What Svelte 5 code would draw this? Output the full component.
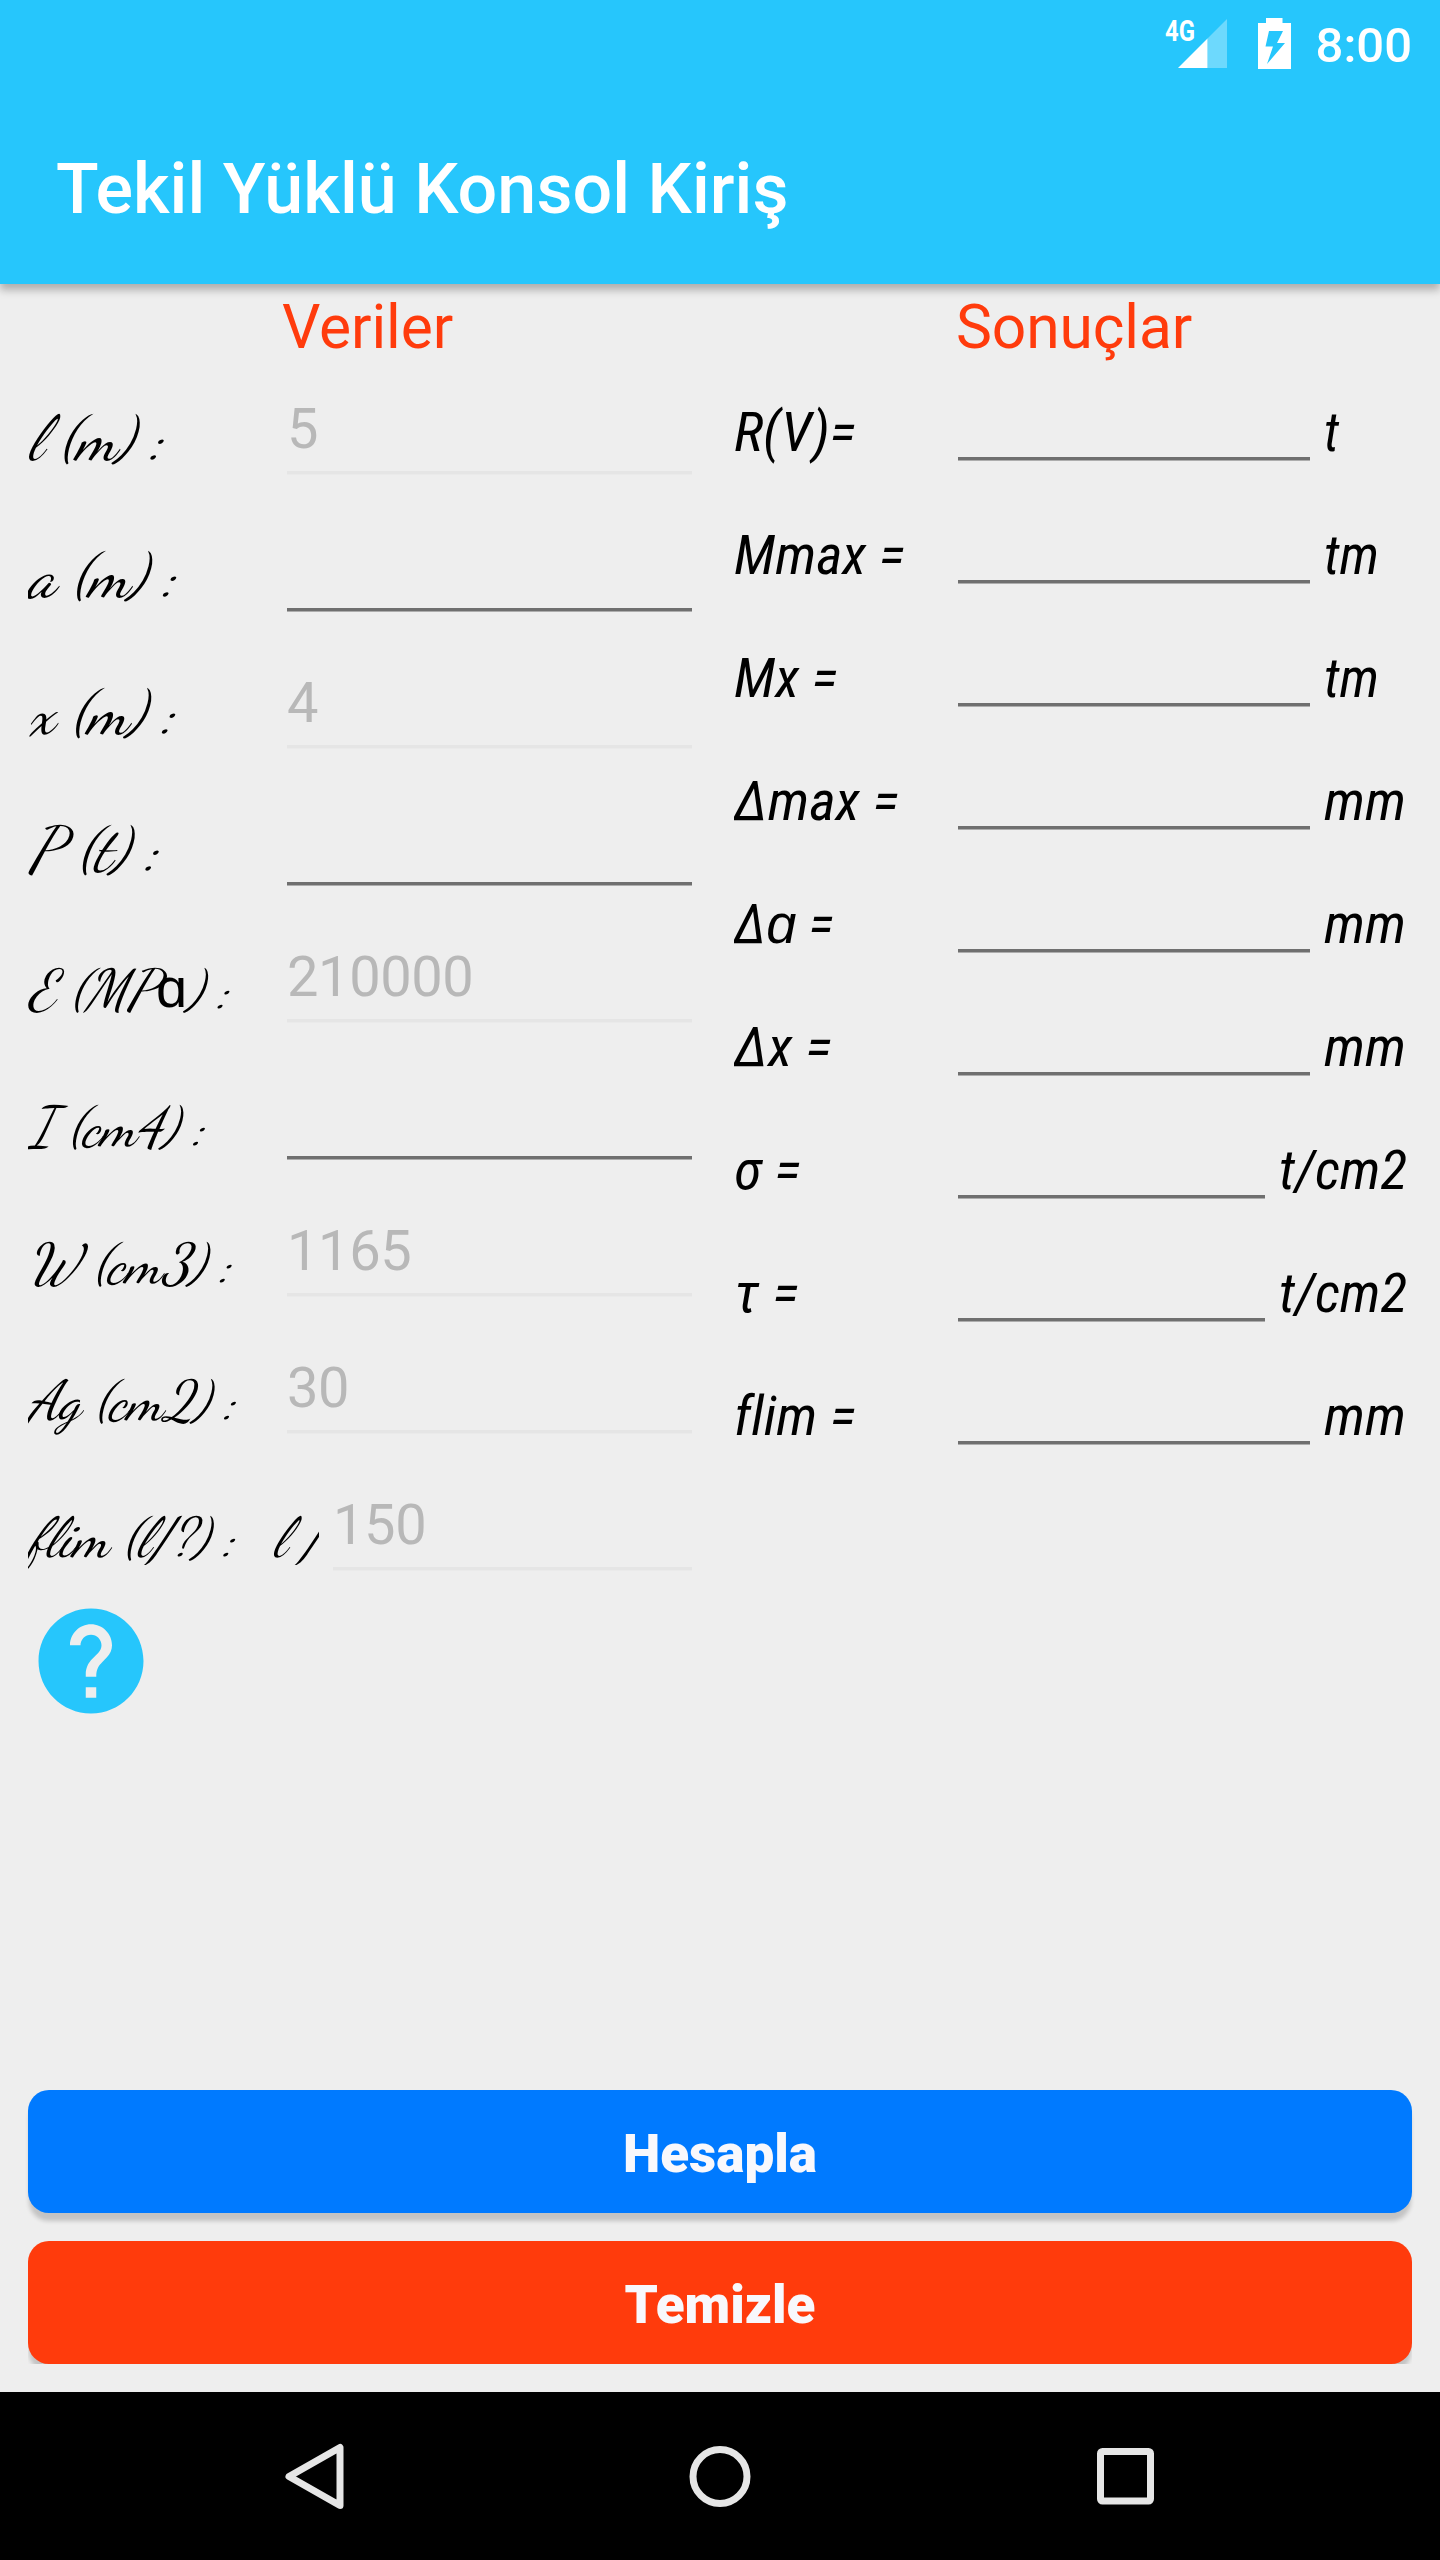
<script>
  const inputs = [
    { label: ["l (m) :"], large: true, hint: "5" },
    { label: ["a (m) :"], large: true },
    { label: ["x (m) :"], large: true, hint: "4" },
    { label: ["P (t) :"], large: true },
    { label: ["E (MP", "ɑ", ") :"], hint: "210000" },
    { label: ["I (cm4) :"] },
    { label: ["W (cm3) :"], hint: "1165" },
    { label: ["Ag (cm2) :"], hint: "30" },
    { label: ["flim (l/?) :"], hint: "150", prefix: "l /" },
  ];

  const results = [
    { label: "R(V)=", width: 122, unit: "t", unitWidth: 15 },
    { label: "Mmax =", width: 171, unit: "tm", unitWidth: 55 },
    { label: "Mx =", width: 104, unit: "tm", unitWidth: 55 },
    { label: "Δmax =", width: 165, unit: "mm", unitWidth: 82 },
    { label: "Δɑ =", width: 100, unit: "mm", unitWidth: 82 },
    { label: "Δx =", width: 98, unit: "mm", unitWidth: 82 },
    { label: "σ =", width: 67, unit: "t/cm2", unitWidth: 128 },
    { label: "τ =", width: 65, unit: "t/cm2", unitWidth: 128 },
    { label: "flim =", width: 122, unit: "mm", unitWidth: 82 },
  ];
</script>

<div class="screen">
  <header>
    <div class="status">
      <svg class="signal" width="66" height="60" viewBox="0 0 66 60">
        <text x="0" y="30" textLength="30" lengthAdjust="spacingAndGlyphs">4G</text>
        <path d="M42.5 27.5 62 8v49H42.5z" fill="#fff" fill-opacity=".33" />
        <path d="M13 57 42.5 27.5V57z" fill="#fff" />
      </svg>
      <svg class="battery" width="33" height="51" viewBox="0 0 33 51">
        <path
          fill="#fff"
          fill-rule="evenodd"
          d="M8 0h16.500v5H33v46H0V5h8zM11 13 7.500 28.500h7.500L9 46 27 25H19l6-12z"
        />
      </svg>
      <span class="clock">8:00</span>
    </div>
    <h1>Tekil Yüklü Konsol Kiriş</h1>
  </header>

  <main>
    <section class="data">
      <h2>Veriler</h2>
      {#each inputs as row}
        <div class="row">
          <svg class="label" class:large={row.large} width="240" height="80">
            <text x="0" y={row.large ? 57.5 : 58.5}>{row.label[0]}{#if row.label[1]}<tspan class="alpha" dy="-1">{row.label[1]}</tspan><tspan dy="1">{row.label[2]}</tspan>{/if}</text>
          </svg>
          {#if row.prefix}
            <svg class="label prefix" width="46" height="80">
              <text x="0" y="58.5">{row.prefix}</text>
            </svg>
          {/if}
          <input class:hinted={row.hint} placeholder={row.hint} />
        </div>
      {/each}
      <svg class="help" width="126" height="126" viewBox="0 0 24 24">
        <path
          fill="#26c6fc"
          d="M12 2C6.480 2 2 6.480 2 12s4.480 10 10 10 10-4.480 10-10S17.520 2 12 2zm1 17h-2v-2h2v2zm2.070-7.750l-.9.92C13.450 12.900 13 13.500 13 15h-2v-.5c0-1.100.45-2.100 1.170-2.830l1.240-1.260c.37-.36.59-.86.59-1.410 0-1.100-.9-2-2-2s-2 .9-2 2H8c0-2.210 1.790-4 4-4s4 1.790 4 4c0 .88-.36 1.680-.93 2.250z"
        />
      </svg>
    </section>

    <section class="results">
      <h2>Sonuçlar</h2>
      {#each results as row}
        <div class="row">
          <svg class="name" width="224" height="80">
            <text x="0" y="59" textLength={row.width} lengthAdjust="spacingAndGlyphs">{row.label}</text>
          </svg>
          <input />
          <svg class="unit" class:wide={row.unit === "t/cm2"} height="80">
            <text x="0" y="59" textLength={row.unitWidth} lengthAdjust="spacingAndGlyphs">{row.unit}</text>
          </svg>
        </div>
      {/each}
    </section>
  </main>

  <div class="actions">
    <button class="calculate">Hesapla</button>
    <div class="clip"><button class="clear">Temizle</button></div>
  </div>

  <nav>
    <svg width="66" height="72" viewBox="0 0 66 72">
      <path d="M58 7.500v58L7 36.500z" />
    </svg>
    <svg width="66" height="72" viewBox="0 0 66 72">
      <circle cx="33" cy="36.500" r="27" />
    </svg>
    <svg width="66" height="72" viewBox="0 0 66 72">
      <rect x="8.500" y="11.500" width="50" height="49.500" rx="2" />
    </svg>
  </nav>
</div>

<style>
  :global(body) {
    background: #eee;
  }

  .screen {
    display: flex;
    flex-direction: column;
    width: 1440px;
    height: 2560px;
    overflow: hidden;
    background: #eee;
    font-family: Roboto, "Liberation Sans", sans-serif;
  }

  header {
    height: 284px;
    background: #26c6fc;
    box-shadow: 0 6px 8px rgba(0, 0, 0, 0.27);
    color: #fff;
  }

  .status {
    display: flex;
    align-items: flex-start;
    justify-content: flex-end;
    height: 84px;
    padding: 0 28px 0 0;
    box-sizing: border-box;
  }

  .signal {
    margin: 11px 27px 0 0;
  }

  .signal text {
    fill: #fff;
    font-size: 29px;
    font-weight: 700;
  }

  .battery {
    margin: 18px 25px 0 0;
  }

  .clock {
    margin-top: 16px;
    font-size: 49px;
    font-weight: 500;
    line-height: 60px;
  }

  h1 {
    margin: 65px 0 0 56px;
    font-size: 70px;
    font-weight: 500;
    line-height: 80px;
    letter-spacing: 0.06px;
  }

  main {
    display: flex;
    flex: 1;
  }

  h2 {
    height: 85px;
    margin: 0;
    color: #ff3b0c;
    font-size: 60.500px;
    font-weight: 400;
    line-height: 87px;
    letter-spacing: -0.1px;
  }

  .data {
    width: 692px;
    padding-left: 28px;
    box-sizing: border-box;
  }

  .data h2 {
    padding-left: 254px;
  }

  .results {
    width: 748px;
    padding-left: 42px;
    box-sizing: border-box;
  }

  .results h2 {
    padding-left: 222px;
  }

  .row {
    display: flex;
    align-items: flex-start;
  }

  .data .row {
    height: 137px;
  }

  .results .row {
    height: 123px;
  }

  svg {
    display: block;
    flex: none;
  }

  .label {
    margin: 32px 19px 0 0;
    overflow: hidden;
    font-family: "Dancing Script", "Liberation Serif", serif;
    font-size: 56px;
    font-style: italic;
    font-weight: 450;
  }

  .label.large {
    font-size: 63px;
  }

  .prefix {
    margin-left: -14px;
    margin-right: 14px;
  }

  .alpha {
    font-family: Roboto, sans-serif;
    font-style: normal;
    font-weight: 500;
  }

  input {
    flex: 1;
    min-width: 0;
    height: 75px;
    margin: 30px 0 0;
    padding: 0 0 12px;
    box-sizing: border-box;
    border: 0;
    border-bottom: 3px solid #6f6f6f;
    border-radius: 0;
    box-shadow: 0 1px 0 #adadad;
    outline: 0;
    background: none;
    font-family: inherit;
    font-size: 56px;
    letter-spacing: -0.4px;
  }

  input.hinted {
    border-color: #e5e5e5;
    box-shadow: 0 1px 0 #eaeaea;
  }

  input::placeholder {
    color: #b8b8b8;
    opacity: 1;
  }

  .results input {
    margin-top: 16px;
  }

  .name,
  .unit {
    margin-top: 23px;
    font-size: 56px;
    font-style: italic;
    font-stretch: condensed;
    font-variant-ligatures: none;
  }

  .unit {
    width: 116px;
    margin-left: 14px;
  }

  .unit.wide {
    width: 161px;
  }

  .help {
    margin-top: -4px;
  }

  .actions {
    display: flex;
    flex-direction: column;
    gap: 28px;
    padding: 0 28px 28px;
  }

  .clip {
    overflow: hidden;
  }

  button {
    display: block;
    width: 100%;
    height: 123px;
    padding: 4px 0 0;
    border: 0;
    border-radius: 21px;
    box-shadow: 0 9px 4px -1px rgba(0, 0, 0, 0.18);
    color: #f8f8fc;
    font-family: inherit;
    font-size: 53px;
    font-weight: 900;
  }

  .calculate {
    background: #007aff;
  }

  .clear {
    background: #ff3b0c;
  }

  nav {
    display: flex;
    justify-content: center;
    gap: 339px;
    height: 168px;
    padding-top: 48px;
    box-sizing: border-box;
    background: #000;
  }

  nav svg {
    fill: none;
    stroke: #e6e6e6;
    stroke-width: 7;
    stroke-linejoin: round;
  }
</style>
